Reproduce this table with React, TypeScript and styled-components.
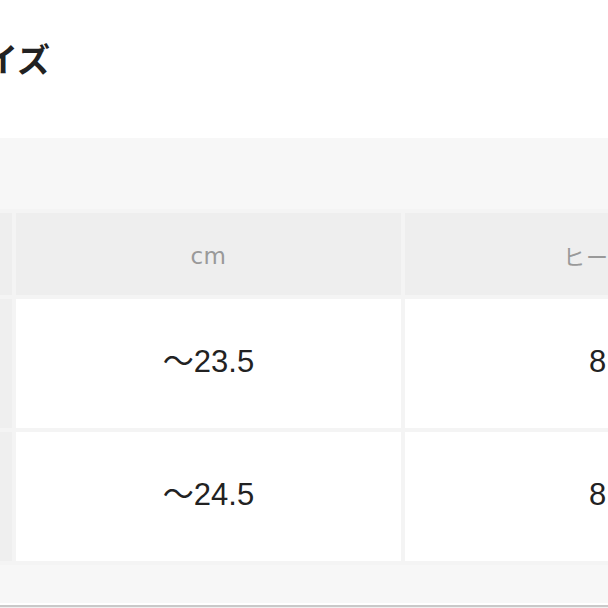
import React from "react";
import styled, { createGlobalStyle } from "styled-components";

const Global = createGlobalStyle`
  html, body {
    margin: 0;
    padding: 0;
    background: #ffffff;
    overflow: hidden;
  }
  body {
    font-family: "Liberation Sans", "Noto Sans CJK JP", sans-serif;
  }
`;

const Page = styled.div`
  width: 608px;
  height: 608px;
  overflow: hidden;
  display: flex;
  flex-direction: column;
`;

const Header = styled.header`
  height: 138px;
  box-sizing: border-box;
  padding-top: 42px;
  background: #ffffff;
`;

const Title = styled.h2`
  margin: 0 0 0 -48px;
  font-family: "Noto Sans CJK JP", sans-serif;
  font-weight: 700;
  font-size: 33px;
  line-height: 33px;
  color: #222222;
  white-space: nowrap;
`;

const Panel = styled.section`
  height: 465px;
  box-sizing: border-box;
  background: #f7f7f7;
  padding-top: 71px;
  overflow: hidden;
`;

const Table = styled.table`
  margin-left: -100px;
  border-collapse: separate;
  border-spacing: 4px;
  background: #f4f4f4;
  table-layout: fixed;
  width: 894px;
`;

const HeadCell = styled.th<{ $w?: number }>`
  width: ${(p) => (p.$w ? `${p.$w}px` : "auto")};
  height: 78px;
  padding: 4px 0 0;
  background: #eeeeee;
  color: #999999;
  font-weight: 400;
  font-size: 23px;
  line-height: 1;
  text-align: center;
  vertical-align: middle;
  white-space: nowrap;
  overflow: hidden;
`;

const Unit = styled.span`
  font-family: "DejaVu Sans", sans-serif;
  font-size: 23px;
  letter-spacing: 0.5px;
`;

const Label = styled.span`
  font-family: "Noto Sans CJK JP", sans-serif;
  font-size: 22px;
  letter-spacing: 1px;
`;

const RowHead = styled.th`
  height: 129px;
  padding: 0;
  background: #efefef;
`;

const Cell = styled.td`
  height: 124px;
  padding: 0 0 5px;
  background: #ffffff;
  color: #222222;
  font-size: 31px;
  line-height: 1;
  text-align: center;
  vertical-align: middle;
  white-space: nowrap;
  overflow: hidden;
`;

const Divider = styled.div`
  margin-top: 2px;
  border-top: 2px solid #c9c9c9;
  background: #f0f0f0;
  flex: 1;
`;

const rows = [
  { cm: "〜23.5", heel: "8" },
  { cm: "〜24.5", heel: "8" },
];

export default function App() {
  return (
    <Page>
      <Global />
      <Header>
        <Title>サイズ</Title>
      </Header>
      <Panel>
        <Table>
          <thead>
            <tr>
              <HeadCell $w={108} />
              <HeadCell $w={385}>
                <Unit>cm</Unit>
              </HeadCell>
              <HeadCell $w={385}>
                <Label>ヒール</Label>
              </HeadCell>
            </tr>
          </thead>
          <tbody>
            {rows.map((r) => (
              <tr key={r.cm}>
                <RowHead />
                <Cell>{r.cm}</Cell>
                <Cell>{r.heel}</Cell>
              </tr>
            ))}
          </tbody>
        </Table>
      </Panel>
      <Divider />
    </Page>
  );
}
